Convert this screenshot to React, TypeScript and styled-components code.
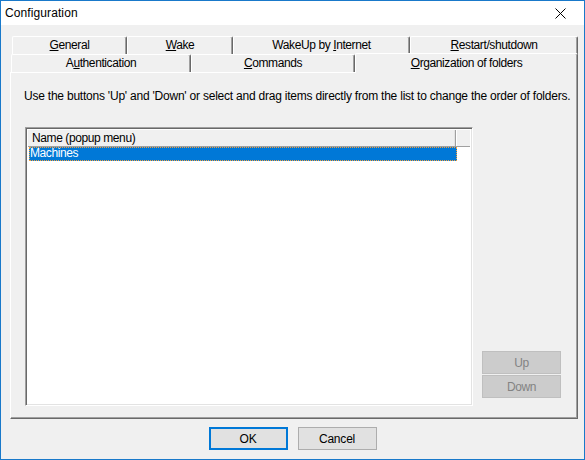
import styled, { createGlobalStyle } from 'styled-components';

const GlobalStyle = createGlobalStyle`
  html, body {
    margin: 0;
    padding: 0;
    background: #f0f0f0;
  }
  * {
    box-sizing: border-box;
  }
`;

const FONT = `'Liberation Sans', Arial, sans-serif`;

type TabDef = { label: string; key: string; width: number };

const backTabs: TabDef[] = [
  { label: 'General', key: 'G', width: 115 },
  { label: 'Wake', key: 'W', width: 106 },
  { label: 'WakeUp by Internet', key: 'I', width: 177 },
  { label: 'Restart/shutdown', key: 'R', width: 168 },
];

const frontTabs: TabDef[] = [
  { label: 'Authentication', key: 'u', width: 180 },
  { label: 'Commands', key: 'C', width: 164 },
];

// Underline the access key letter like a Win32 mnemonic
function Mnemonic({ label, letter }: { label: string; letter: string }) {
  const idx = label.indexOf(letter);
  if (idx < 0) return <span>{label}</span>;
  return (
    <span>
      {label.slice(0, idx)}
      <u>{label[idx]}</u>
      {label.slice(idx + 1)}
    </span>
  );
}

function App() {
  return (
    <>
      <GlobalStyle />
      <Window>
        <TitleBar>
          <Title>Configuration</Title>
          <CloseButton>
            <svg width="11" height="11" viewBox="0 0 11 11">
              <path d="M0.5 0.5 L10.5 10.5 M10.5 0.5 L0.5 10.5" stroke="#000" strokeWidth="1" />
            </svg>
          </CloseButton>
        </TitleBar>
        <Body>
          <TabControl>
            <TabRow $indent={2}>
              {backTabs.map((t) => (
                <Tab key={t.label} $width={t.width}>
                  <Mnemonic label={t.label} letter={t.key} />
                </Tab>
              ))}
            </TabRow>
            <TabRow $indent={1}>
              {frontTabs.map((t) => (
                <Tab key={t.label} $width={t.width}>
                  <Mnemonic label={t.label} letter={t.key} />
                </Tab>
              ))}
              <ActiveTab>
                <Mnemonic label="Organization of folders" letter="O" />
              </ActiveTab>
            </TabRow>
            <Panel>
              <Hint>
                Use the buttons 'Up' and 'Down' or select and drag items directly from the list to
                change the order of folders.
              </Hint>
              <ListArea>
                <ListBox>
                  <HeaderRow>
                    <HeaderCell>Name (popup menu)</HeaderCell>
                    <HeaderFiller />
                  </HeaderRow>
                  <ListRow $selected>Machines</ListRow>
                </ListBox>
                <SideButtons>
                  <DisabledButton disabled>Up</DisabledButton>
                  <DisabledButton disabled>Down</DisabledButton>
                </SideButtons>
              </ListArea>
            </Panel>
          </TabControl>
          <Footer>
            <DialogButton $default>OK</DialogButton>
            <DialogButton>Cancel</DialogButton>
          </Footer>
        </Body>
      </Window>
    </>
  );
}

export default App;

const Window = styled.div`
  width: 585px;
  height: 460px;
  display: flex;
  flex-direction: column;
  border: 1px solid #1979ca;
  background: #f0f0f0;
  font-family: ${FONT};
  font-size: 12px;
  letter-spacing: -0.4px;
  color: #000;
`;

const TitleBar = styled.div`
  height: 24px;
  flex: none;
  display: flex;
  align-items: center;
  justify-content: space-between;
  background: #fff;
  padding-left: 4px;
`;

const Title = styled.span`
  font-size: 12px;
  letter-spacing: 0.1px;
`;

const CloseButton = styled.div`
  width: 46px;
  height: 24px;
  display: flex;
  align-items: center;
  justify-content: center;
  margin-right: 1px;
`;

const Body = styled.div`
  flex: 1;
  display: flex;
  flex-direction: column;
  padding: 11px 6px 0 9px;
`;

const TabControl = styled.div`
  display: flex;
  flex-direction: column;
`;

const TabRow = styled.div<{ $indent: number }>`
  display: flex;
  height: 18px;
  padding-left: ${(p) => p.$indent}px;
  align-items: flex-end;
`;

const Tab = styled.div<{ $width: number }>`
  width: ${(p) => p.$width}px;
  height: 18px;
  display: flex;
  align-items: center;
  justify-content: center;
  padding-bottom: 1px;
  background: #f0f0f0;
  border-top: 1px solid #fff;
  border-left: 1px solid #fff;
  border-right: 1px solid #696969;
  box-shadow: inset -1px 0 #a0a0a0;
  border-radius: 2px 2px 0 0;
  color: #000;
`;

const ActiveTab = styled.div`
  flex: 1;
  height: 20px;
  margin-bottom: -1px;
  position: relative;
  z-index: 1;
  display: flex;
  align-items: center;
  justify-content: center;
  padding-bottom: 1px;
  background: #f0f0f0;
  border-top: 1px solid #fff;
  border-left: 1px solid #fff;
  border-right: 1px solid #696969;
  box-shadow: inset -1px 0 #a0a0a0;
  border-radius: 2px 2px 0 0;
`;

const Panel = styled.div`
  height: 347px;
  display: flex;
  flex-direction: column;
  border-top: 1px solid #fff;
  border-left: 1px solid #fff;
  border-right: 1px solid #696969;
  border-bottom: 1px solid #696969;
  box-shadow: inset -1px -1px #a0a0a0;
  padding: 15px 16px 12px 13px;
`;

const Hint = styled.div`
  line-height: 16px;
  white-space: nowrap;
  letter-spacing: -0.22px;
`;

const ListArea = styled.div`
  flex: 1;
  display: flex;
  gap: 9px;
  margin-top: 23px;
  padding-left: 1px;
`;

const ListBox = styled.div`
  width: 448px;
  display: flex;
  flex-direction: column;
  background: #fff;
  border-top: 1px solid #a0a0a0;
  border-left: 1px solid #a0a0a0;
  border-right: 1px solid #fff;
  border-bottom: 1px solid #fff;
  box-shadow: inset 1px 1px #696969, inset -1px -1px #e3e3e3;
  padding: 2px;
`;

const HeaderRow = styled.div`
  display: flex;
  height: 17px;
  background: #f0f0f0;
  border-bottom: 1px solid #a0a0a0;
`;

const HeaderCell = styled.div`
  width: 428px;
  padding-left: 4px;
  line-height: 16px;
  border-right: 1px solid #a0a0a0;
  box-shadow: inset -1px 0 #e3e3e3;
`;

const HeaderFiller = styled.div`
  flex: 1;
  border-left: 1px solid #fff;
`;

const ListRow = styled.div<{ $selected?: boolean }>`
  width: 428px;
  height: 14px;
  line-height: 12px;
  padding-left: 1px;
  margin-left: 1px;
  background: ${(p) => (p.$selected ? '#0078d7' : 'transparent')};
  color: ${(p) => (p.$selected ? '#fff' : '#000')};
  outline: ${(p) => (p.$selected ? '1px dotted #f7a13c' : 'none')};
  outline-offset: -1px;
`;

const SideButtons = styled.div`
  width: 79px;
  display: flex;
  flex-direction: column;
  justify-content: flex-end;
  gap: 1px;
  padding-bottom: 8px;
`;

const DisabledButton = styled.button`
  height: 23px;
  background: #cccccc;
  border: 1px solid #bfbfbf;
  color: #838383;
  font-family: ${FONT};
  font-size: 12px;
  letter-spacing: -0.4px;
  padding: 0;
`;

const Footer = styled.div`
  display: flex;
  justify-content: center;
  gap: 10px;
  margin-top: 8px;
  padding-right: 3px;
`;

const DialogButton = styled.button<{ $default?: boolean }>`
  width: 79px;
  height: 23px;
  background: #e1e1e1;
  border: ${(p) => (p.$default ? '2px solid #0078d7' : '1px solid #adadad')};
  color: #000;
  font-family: ${FONT};
  font-size: 12px;
  letter-spacing: -0.2px;
  padding: 0;
`;
